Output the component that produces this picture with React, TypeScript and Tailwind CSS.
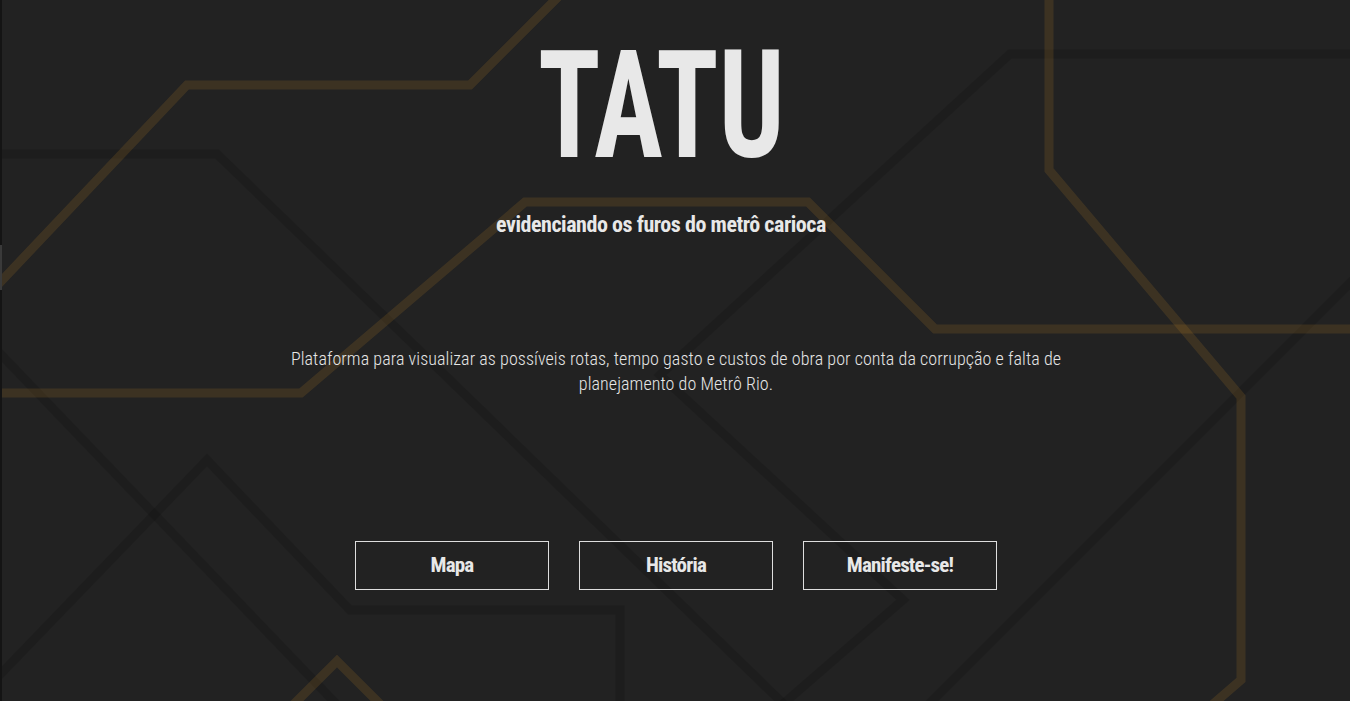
import React from "react";

const cond = { fontFamily: "'Roboto Condensed', 'DejaVu Sans Condensed', sans-serif" };

export default function App() {
  return (
    <div className="relative h-[701px] w-full overflow-hidden bg-[#222222] flex">
      <svg className="absolute inset-0 h-full w-full" viewBox="0 0 1350 701" preserveAspectRatio="none" fill="none">
        <g stroke="#000" strokeOpacity="0.13" strokeWidth="9">
          <polyline points="-10,154 217,154 793,713" />
          <polyline points="-10,343 343,711" />
          <polyline points="-10,685 207,460 350,610 620,610 620,711" />
          <polyline points="1360,54 1010,54 660,375 903,600 775,711" />
          <polyline points="1360,273 922,711" />
        </g>
        <g stroke="rgb(214,150,40)" strokeOpacity="0.15" strokeWidth="9">
          <polyline points="560,-5 470,85 187,85 -10,293" />
          <polyline points="-10,393 301,393 525,202 808,202 935,329 1360,329" />
          <polyline points="1049,-10 1049,170 1241,397 1241,680 1205,711" />
          <polyline points="287,711 337,661 387,711" />
        </g>
      </svg>
      <div className="relative z-10 w-[2px] shrink-0 bg-[#141414] flex flex-col">
        <div className="h-[245px]" />
        <div className="h-[45px] bg-[#3a3a3a]" />
      </div>
      <main className="relative z-10 flex flex-1 flex-col items-center text-[#e8e8e8]">
        <div className="flex flex-col items-center pr-[30px]">
          <h1 className="mt-[30px] text-[151px] leading-none font-bold scale-x-[0.764]" style={cond}>
            TATU
          </h1>
          <p className="mt-[30px] text-[22px] leading-[28px] font-bold tracking-[-0.45px]" style={cond}>
            evidenciando os furos do metrô carioca
          </p>
        </div>
        <p className="mt-[107px] w-[790px] text-center text-[18px] leading-[25px] font-light tracking-[0.07px] text-[#e6e6e6]" style={cond}>
          Plataforma para visualizar as possíveis rotas, tempo gasto e custos de obra por conta da corrupção e falta de planejamento do Metrô Rio.
        </p>
        <div className="mt-[145px] flex gap-[30px]">
          {["Mapa", "História", "Manifeste-se!"].map((t) => (
            <button key={t} className="h-[49px] w-[194px] border border-[#dedede] text-[21px] font-bold tracking-[-0.8px]" style={cond}>
              {t}
            </button>
          ))}
        </div>
      </main>
    </div>
  );
}
